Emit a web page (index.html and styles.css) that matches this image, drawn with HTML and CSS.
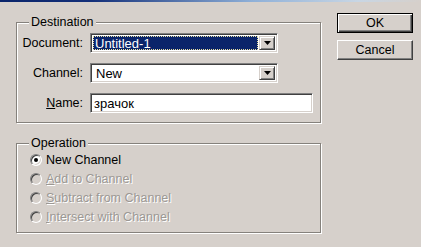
FILE: index.html
```html
<!DOCTYPE html>
<html>
<head>
<meta charset="utf-8">
<link rel="stylesheet" href="styles.css">
</head>
<body>
<div class="titlebar"></div>
<div class="dialog">
  <div class="main">
    <fieldset class="group dest">
      <legend>Destination</legend>
      <div class="row">
        <span class="lbl">Document:</span>
        <div class="combo">
          <div class="field"><span class="sel">Untitled-1</span></div>
          <div class="drop"><svg width="7" height="4" viewBox="0 0 7 4"><polygon points="0,0 7,0 3.5,4" fill="#000"/></svg></div>
        </div>
      </div>
      <div class="row">
        <span class="lbl">Channel:</span>
        <div class="combo">
          <div class="field"><span class="val">New</span></div>
          <div class="drop"><svg width="7" height="4" viewBox="0 0 7 4"><polygon points="0,0 7,0 3.5,4" fill="#000"/></svg></div>
        </div>
      </div>
      <div class="row">
        <span class="lbl"><u>N</u>ame:</span>
        <div class="textbox"><span class="val">зрачок</span></div>
      </div>
    </fieldset>
    <fieldset class="group op">
      <legend>Operation</legend>
      <div class="radio-row"><span class="radio on"></span><span>New Channel</span></div>
      <div class="radio-row disabled"><span class="radio"></span><span><u>A</u>dd to Channel</span></div>
      <div class="radio-row disabled"><span class="radio"></span><span><u>S</u>ubtract from Channel</span></div>
      <div class="radio-row disabled"><span class="radio"></span><span><u>I</u>ntersect with Channel</span></div>
    </fieldset>
  </div>
  <div class="buttons">
    <div class="btn default"><span>OK</span></div>
    <div class="btn"><span>Cancel</span></div>
  </div>
</div>
</body>
</html>
```
FILE: styles.css
```css
body {
  margin: 0;
  width: 421px;
  height: 247px;
  overflow: hidden;
  background: #d6d0cb;
  font-family: "Liberation Sans", Arial, sans-serif;
  font-size: 12.5px;
  color: #000;
}

.titlebar {
  height: 2px;
  background: linear-gradient(to right, #0a246a 0%, #14307a 22%, #8fb0d8 60%, #c8d6e4 85%, #d6d0cb 100%);
}

.dialog {
  display: flex;
  padding-left: 16px;
}

.main {
  width: 305px;
  padding-top: 13px;
}

.group {
  margin: 0;
  min-width: 0;
  border: 1px solid #85817c;
  box-shadow: inset 1px 1px 0 #fff, 1px 1px 0 #fff;
}

.group legend {
  margin-left: 12px;
  padding: 0 2px;
  line-height: 14px;
  background: #d6d0cb;
}

.dest {
  padding: 4px 0 9px 0;
}

.op {
  margin-top: 13px;
  padding: 0 0 6px 0;
}

.row {
  display: flex;
  align-items: center;
  height: 20px;
}

.row + .row {
  margin-top: 10px;
}

.lbl {
  width: 66px;
  margin-right: 7px;
  text-align: right;
}

.combo {
  display: flex;
  width: 188px;
  height: 20px;
  box-sizing: border-box;
  border: 1px solid;
  border-color: #808080 #fff #fff #808080;
  box-shadow: inset 1px 1px 0 #404040, inset -1px -1px 0 #d6d0cb;
  padding: 2px 2px 2px 2px;
  background: #fff;
}

.field {
  flex: 1;
  display: flex;
  align-items: center;
  padding-right: 1px;
}

.sel {
  flex: 1;
  align-self: stretch;
  display: flex;
  align-items: center;
  background: #0a246a;
  color: #fff;
  border: 1px dotted #e8e0a0;
  padding-left: 1px;
  font-size: 13px;
}

.val {
  padding-left: 3px;
  font-size: 13px;
}

.drop {
  width: 16px;
  box-sizing: border-box;
  display: flex;
  align-items: center;
  justify-content: center;
  background: #d6d0cb;
  border: 1px solid;
  border-color: #d6d0cb #404040 #404040 #d6d0cb;
  box-shadow: inset 1px 1px 0 #fff, inset -1px -1px 0 #808080;
}

.textbox {
  width: 223px;
  height: 20px;
  box-sizing: border-box;
  display: flex;
  align-items: center;
  border: 1px solid;
  border-color: #808080 #fff #fff #808080;
  box-shadow: inset 1px 1px 0 #404040, inset -1px -1px 0 #d6d0cb;
  background: #fff;
}

.radio-row {
  display: flex;
  align-items: center;
  height: 19px;
  padding-left: 13px;
  gap: 4px;
}

.radio {
  width: 12px;
  height: 12px;
  box-sizing: border-box;
  border-radius: 50%;
  border: 1px solid;
  border-color: #808080 #fff #fff #808080;
  box-shadow: inset 1px 1px 0 #404040, inset -1px -1px 0 #d6d0cb;
  background: #fff;
  display: flex;
  align-items: center;
  justify-content: center;
}

.radio.on::after {
  content: "";
  width: 4px;
  height: 4px;
  border-radius: 50%;
  background: #000;
}

.disabled .radio {
  background: #d6d0cb;
}

.disabled {
  color: #9c9894;
  text-shadow: 1px 1px 0 #fff;
}

.buttons {
  display: flex;
  flex-direction: column;
  gap: 7px;
  margin-left: 16px;
  padding-top: 11px;
}

.btn {
  width: 76px;
  height: 20px;
  box-sizing: border-box;
  display: flex;
  align-items: center;
  justify-content: center;
  border: 1px solid;
  border-color: #fff #404040 #404040 #fff;
  box-shadow: inset -1px -1px 0 #808080;
  background: #d6d0cb;
}

.btn.default {
  border-color: #000;
  box-shadow: inset 1px 1px 0 #fff, inset -1px -1px 0 #404040, inset -2px -2px 0 #808080;
}
```
